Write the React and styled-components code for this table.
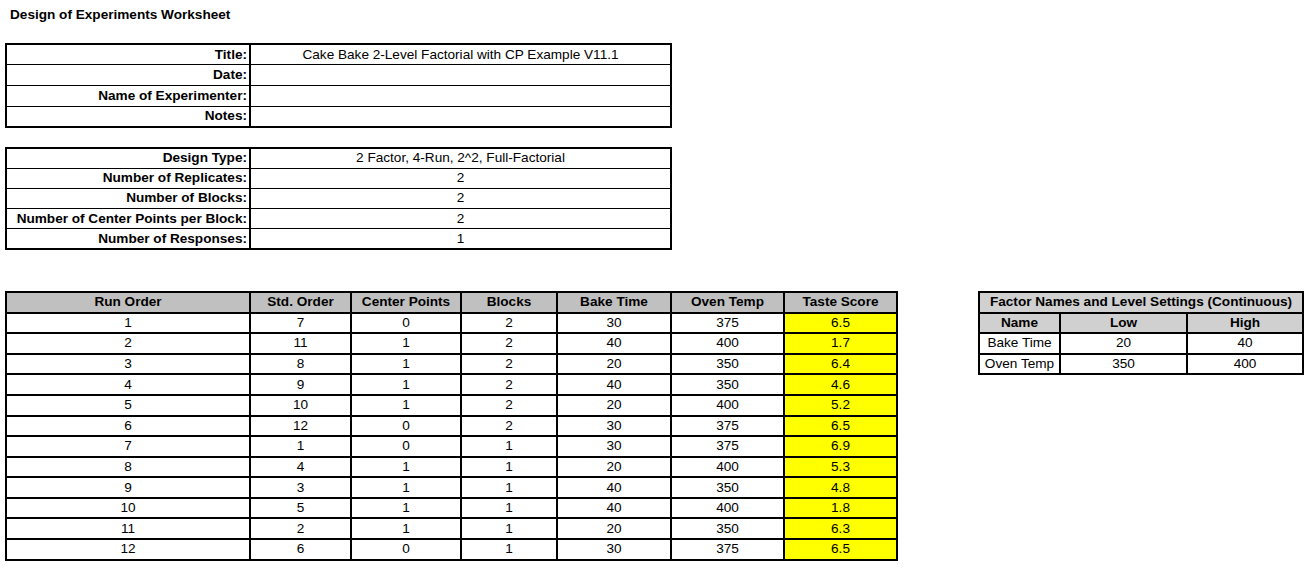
import React from 'react';
import styled, { createGlobalStyle } from 'styled-components';

const info = [
  ['Title:', 'Cake Bake 2-Level Factorial with CP Example V11.1'],
  ['Date:', ''],
  ['Name of Experimenter:', ''],
  ['Notes:', ''],
];

const design = [
  ['Design Type:', '2 Factor, 4-Run, 2^2, Full-Factorial'],
  ['Number of Replicates:', '2'],
  ['Number of Blocks:', '2'],
  ['Number of Center Points per Block:', '2'],
  ['Number of Responses:', '1'],
];

const runHeaders = ['Run Order', 'Std. Order', 'Center Points', 'Blocks', 'Bake Time', 'Oven Temp', 'Taste Score'];
const runWidths = [244, 101, 110, 96, 114, 113, 113];

const runs = [
  [1, 7, 0, 2, 30, 375, '6.5'],
  [2, 11, 1, 2, 40, 400, '1.7'],
  [3, 8, 1, 2, 20, 350, '6.4'],
  [4, 9, 1, 2, 40, 350, '4.6'],
  [5, 10, 1, 2, 20, 400, '5.2'],
  [6, 12, 0, 2, 30, 375, '6.5'],
  [7, 1, 0, 1, 30, 375, '6.9'],
  [8, 4, 1, 1, 20, 400, '5.3'],
  [9, 3, 1, 1, 40, 350, '4.8'],
  [10, 5, 1, 1, 40, 400, '1.8'],
  [11, 2, 1, 1, 20, 350, '6.3'],
  [12, 6, 0, 1, 30, 375, '6.5'],
];

const factors = [
  ['Bake Time', 20, 40],
  ['Oven Temp', 350, 400],
];

function Worksheet() {
  return (
    <Page>
      <GlobalStyle />
      <Heading>Design of Experiments Worksheet</Heading>

      <InfoTable>
        <colgroup>
          <Col $w={244} />
          <Col $w={421} />
        </colgroup>
        <tbody>
          {info.map(([label, value]) => (
            <InfoRow key={label} $h={20.75}>
              <Label>{label}</Label>
              <Value>{value}</Value>
            </InfoRow>
          ))}
        </tbody>
      </InfoTable>

      <InfoTable $gap>
        <colgroup>
          <Col $w={244} />
          <Col $w={421} />
        </colgroup>
        <tbody>
          {design.map(([label, value]) => (
            <InfoRow key={label} $h={20.2}>
              <Label>{label}</Label>
              <Value>{value}</Value>
            </InfoRow>
          ))}
        </tbody>
      </InfoTable>

      <Bottom>
        <GridTable>
          <colgroup>
            {runWidths.map((w, i) => (
              <Col key={i} $w={w} />
            ))}
          </colgroup>
          <thead>
            <tr>
              {runHeaders.map((h) => (
                <HeadCell key={h}>{h}</HeadCell>
              ))}
            </tr>
          </thead>
          <tbody>
            {runs.map((row) => (
              <tr key={row[0]}>
                {row.map((v, i) => (
                  <Cell key={i} $score={i === 6}>
                    {v}
                  </Cell>
                ))}
              </tr>
            ))}
          </tbody>
        </GridTable>

        <GridTable>
          <colgroup>
            <Col $w={81} />
            <Col $w={127} />
            <Col $w={116} />
          </colgroup>
          <thead>
            <tr>
              <HeadCell $light colSpan={3}>
                Factor Names and Level Settings (Continuous)
              </HeadCell>
            </tr>
            <tr>
              <HeadCell $light>Name</HeadCell>
              <HeadCell $light>Low</HeadCell>
              <HeadCell $light>High</HeadCell>
            </tr>
          </thead>
          <tbody>
            {factors.map(([name, low, high]) => (
              <tr key={name}>
                <Cell>{name}</Cell>
                <Cell>{low}</Cell>
                <Cell>{high}</Cell>
              </tr>
            ))}
          </tbody>
        </GridTable>
      </Bottom>
    </Page>
  );
}

export default function App() {
  return <Worksheet />;
}

const GlobalStyle = createGlobalStyle`
  body {
    margin: 0;
    background: #ffffff;
    font-family: "Liberation Sans", Arial, sans-serif;
    color: #000000;
  }
`;

const Page = styled.div`
  display: flex;
  flex-direction: column;
  align-items: flex-start;
  padding: 7px 5px 0;
  font-size: 13.6px;
`;

const Heading = styled.div`
  margin-left: 5px;
  font-weight: bold;
  font-size: 13.6px;
  line-height: 16px;
  margin-bottom: 20px;
`;

const Col = styled.col`
  width: ${(p) => p.$w}px;
`;

const InfoTable = styled.table`
  border-collapse: collapse;
  table-layout: fixed;
  width: 665px;
  border: 2px solid #000;
  margin-top: ${(p) => (p.$gap ? '19px' : '0')};
`;

const InfoRow = styled.tr`
  height: ${(p) => p.$h}px;
  & + & td {
    border-top: 1px solid #000;
  }
`;

const Label = styled.td`
  padding: 0 2px 0 0;
  text-align: right;
  font-weight: bold;
  border-right: 2px solid #000;
  line-height: 16px;
  white-space: nowrap;
`;

const Value = styled.td`
  padding: 0;
  text-align: center;
  line-height: 16px;
`;

const Bottom = styled.div`
  display: flex;
  align-items: flex-start;
  gap: 80px;
  margin-top: 41px;
`;

const GridTable = styled.table`
  border-collapse: collapse;
  table-layout: fixed;
  border: 2px solid #000;

  tr {
    height: 20.6px;
  }
`;

const HeadCell = styled.th`
  background: ${(p) => (p.$light ? '#d0d0d0' : '#c0c0c0')};
  border: 2px solid #000;
  padding: 0;
  font-weight: bold;
  text-align: center;
  line-height: 16px;
  white-space: nowrap;
`;

const Cell = styled.td`
  background: ${(p) => (p.$score ? '#ffff00' : '#ffffff')};
  border: 2px solid #000;
  padding: 0;
  text-align: center;
  line-height: 16px;
  white-space: nowrap;
`;
